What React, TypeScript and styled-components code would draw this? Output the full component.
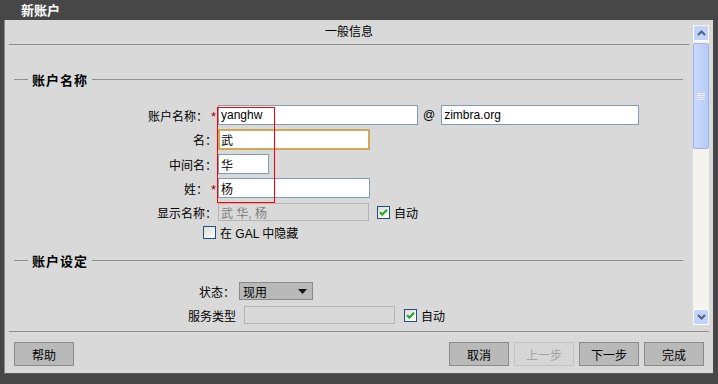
import styled, { createGlobalStyle } from "styled-components";

const GlobalStyle = createGlobalStyle`
  html, body {
    margin: 0;
    padding: 0;
  }
  body {
    width: 718px;
    height: 384px;
    overflow: hidden;
    background: #474747;
    font-family: "Liberation Sans", "Noto Sans CJK SC", sans-serif;
    font-size: 12px;
    color: #000;
  }
`;

const Window = styled.div`
  position: relative;
  width: 718px;
  height: 384px;
  background: #474747;
  display: flex;
  flex-direction: column;
`;

const TitleBar = styled.div`
  height: 20px;
  line-height: 22px;
  padding-left: 21px;
  color: #fff;
  font-weight: bold;
  font-size: 13px;
  flex-shrink: 0;
`;

const Panel = styled.div`
  margin: 0 5px 0 4px;
  height: 354px;
  background: #d9d9d9;
  border-left: 1px solid #8a8a8a;
  border-bottom: 1px solid #5a5a5a;
  box-sizing: border-box;
  display: flex;
  flex-direction: column;
`;

const Body = styled.div`
  display: flex;
  height: 307px;
  flex-shrink: 0;
`;

const Content = styled.div`
  flex: 1;
  overflow: hidden;
  padding-left: 4px;
`;

const TabHeader = styled.div`
  height: 24px;
  line-height: 24px;
  text-align: center;
  border-bottom: 1px solid #8f8f8f;
`;

const Section = styled.div<{ $top: number }>`
  padding: 0 6px 0 5px;
  margin-top: ${(p) => p.$top}px;
`;

const SectionHead = styled.div`
  display: flex;
  align-items: center;
  height: 20px;
  gap: 4px;
  font-weight: bold;
  font-size: 13px;
  letter-spacing: 1px;

  &::before {
    content: "";
    width: 14px;
    border-top: 1px solid #8f8f8f;
  }
  &::after {
    content: "";
    flex: 1;
    border-top: 1px solid #8f8f8f;
  }
`;

const Rows = styled.div<{ $top: number }>`
  display: flex;
  flex-direction: column;
  gap: 4px;
  margin-top: ${(p) => p.$top}px;
`;

const Row = styled.div<{ $indent?: number; $gap?: number }>`
  display: flex;
  align-items: center;
  min-height: 20px;
  padding-left: ${(p) => p.$indent || 0}px;
  margin-top: ${(p) => p.$gap || 0}px;
`;

const Label = styled.div<{ $w: number; $pad?: number }>`
  width: ${(p) => p.$w}px;
  flex-shrink: 0;
  text-align: right;
  padding-right: ${(p) => (p.$pad === undefined ? 1 : p.$pad)}px;
  box-sizing: border-box;
  white-space: nowrap;
`;

const Star = styled.span`
  color: #990000;
  font-size: 13px;
  margin-left: 3px;
`;

const Field = styled.div<{ $w: number; $focus?: boolean; $disabled?: boolean; $h?: number; $ml?: number }>`
  width: ${(p) => p.$w}px;
  height: ${(p) => p.$h || 20}px;
  margin-left: ${(p) => p.$ml || 0}px;
  box-sizing: border-box;
  border: ${(p) =>
    p.$focus ? "2px solid #cfa858" : p.$disabled ? "1px solid #b4b4b4" : "1px solid #7f9db9"};
  background: ${(p) => (p.$disabled ? "#d9d9d9" : "#fff")};
  color: ${(p) => (p.$disabled ? "#7c7c7c" : "#000")};
  padding: 0 ${(p) => (p.$focus ? 1 : 2)}px;
  display: flex;
  align-items: center;
  font-size: 12px;
  white-space: nowrap;
`;

const At = styled.span`
  margin: 0 6px 0 5px;
`;

const CheckWrap = styled.label<{ $ml?: number }>`
  display: flex;
  align-items: center;
  gap: 4px;
  margin-left: ${(p) => p.$ml || 0}px;
`;

const Select = styled.div`
  width: 74px;
  height: 18px;
  box-sizing: border-box;
  border: 1px solid #8a8a8a;
  background: #b9b9b9;
  display: flex;
  align-items: center;
  justify-content: space-between;
  padding: 0 5px 0 3px;
`;

const ScrollBar = styled.div`
  width: 16px;
  height: 300px;
  margin: 5px 4px 0 4px;
  background: #f4f3ee;
  display: flex;
  flex-direction: column;
  flex-shrink: 0;
`;

const ScrollButton = styled.div`
  height: 16px;
  box-sizing: border-box;
  border: 1px solid #fff;
  background: #c3d4fb;
  border-radius: 2px;
  display: flex;
  align-items: center;
  justify-content: center;
`;

const Thumb = styled.div`
  height: 106px;
  margin-top: 2px;
  box-sizing: border-box;
  border: 1px solid #9fb5e6;
  border-radius: 2px;
  background: linear-gradient(to right, #c9d8fc, #b8cbf7);
  display: flex;
  align-items: center;
  justify-content: center;
`;

const Track = styled.div`
  flex: 1;
`;

const Footer = styled.div`
  margin: 4px 4px 0 4px;
  border-top: 1px solid #8f8f8f;
  padding: 10px 5px 0 5px;
  display: flex;
  gap: 5px;
`;

const Spacer = styled.div`
  flex: 1;
`;

const Button = styled.div<{ $disabled?: boolean }>`
  width: 60px;
  height: 24px;
  box-sizing: border-box;
  border: 1px solid ${(p) => (p.$disabled ? "#c2c2c2" : "#8a8a8a")};
  background: ${(p) => (p.$disabled ? "#d6d6d6" : "#b9b9b9")};
  color: ${(p) => (p.$disabled ? "#a3a3a3" : "#000")};
  display: flex;
  align-items: center;
  justify-content: center;
  font-size: 12px;
`;

const Annotation = styled.div`
  position: absolute;
  left: 217px;
  top: 107px;
  width: 58px;
  height: 96px;
  box-sizing: border-box;
  border: 1px solid #ff0000;
  pointer-events: none;
`;

function CheckBox({ checked }: { checked?: boolean }) {
  return (
    <svg width="13" height="13" viewBox="0 0 13 13">
      <defs>
        <linearGradient id="cbg" x1="0" y1="0" x2="1" y2="1">
          <stop offset="0" stopColor="#dcdcd5" />
          <stop offset="1" stopColor="#ffffff" />
        </linearGradient>
      </defs>
      <rect x="0.5" y="0.5" width="12" height="12" fill="url(#cbg)" stroke="#1c5180" />
      {checked && (
        <path d="M3 6.2 L5.3 8.6 L10 3.8" fill="none" stroke="#21a121" strokeWidth="2" />
      )}
    </svg>
  );
}

function Chevron({ up }: { up?: boolean }) {
  return (
    <svg width="9" height="6" viewBox="0 0 9 6">
      <path
        d={up ? "M1 5 L4.5 1.5 L8 5" : "M1 1 L4.5 4.5 L8 1"}
        fill="none"
        stroke="#4d6185"
        strokeWidth="2"
      />
    </svg>
  );
}

export default function App() {
  return (
    <Window>
      <GlobalStyle />
      <TitleBar>新账户</TitleBar>
      <Panel>
        <Body>
          <Content>
            <TabHeader>一般信息</TabHeader>

            <Section $top={24}>
              <SectionHead>账户名称</SectionHead>
              <Rows $top={16}>
                <Row>
                  <Label $w={204} $pad={2}>
                    账户名称：<Star>*</Star>
                  </Label>
                  <Field $w={200}>yanghw</Field>
                  <At>@</At>
                  <Field $w={198}>zimbra.org</Field>
                </Row>
                <Row>
                  <Label $w={204}>名：</Label>
                  <Field $w={152} $h={21} $focus>
                    武
                  </Field>
                </Row>
                <Row>
                  <Label $w={204}>中间名：</Label>
                  <Field $w={51}>华</Field>
                </Row>
                <Row>
                  <Label $w={204} $pad={2}>
                    姓：<Star>*</Star>
                  </Label>
                  <Field $w={152}>杨</Field>
                </Row>
                <Row>
                  <Label $w={204}>显示名称：</Label>
                  <Field $w={151} $h={18} $disabled>
                    武 华, 杨
                  </Field>
                  <CheckWrap $ml={8}>
                    <CheckBox checked />
                    自动
                  </CheckWrap>
                </Row>
              </Rows>
              <Row $indent={189}>
                <CheckWrap>
                  <CheckBox />在 GAL 中隐藏
                </CheckWrap>
              </Row>
            </Section>

            <Section $top={8}>
              <SectionHead>账户设定</SectionHead>
              <Rows $top={11}>
                <Row>
                  <Label $w={225} $pad={4}>
                    状态：
                  </Label>
                  <Select>
                    <span>现用</span>
                    <svg width="9" height="5" viewBox="0 0 9 5">
                      <path d="M0 0 H9 L4.5 5 Z" fill="#111" />
                    </svg>
                  </Select>
                </Row>
                <Row>
                  <Label $w={225} $pad={3}>
                    服务类型
                  </Label>
                  <Field $w={151} $h={18} $ml={5} $disabled />
                  <CheckWrap $ml={9}>
                    <CheckBox checked />
                    自动
                  </CheckWrap>
                </Row>
              </Rows>
            </Section>
          </Content>

          <ScrollBar>
            <ScrollButton>
              <Chevron up />
            </ScrollButton>
            <Thumb>
              <svg width="8" height="8" viewBox="0 0 8 8">
                <path d="M0 1.5 H8 M0 3.5 H8 M0 5.5 H8 M0 7.5 H8" stroke="#eef3ff" strokeWidth="1" />
              </svg>
            </Thumb>
            <Track />
            <ScrollButton>
              <Chevron />
            </ScrollButton>
          </ScrollBar>
        </Body>

        <Footer>
          <Button>帮助</Button>
          <Spacer />
          <Button>取消</Button>
          <Button $disabled>上一步</Button>
          <Button>下一步</Button>
          <Button>完成</Button>
        </Footer>
      </Panel>
      <Annotation />
    </Window>
  );
}
